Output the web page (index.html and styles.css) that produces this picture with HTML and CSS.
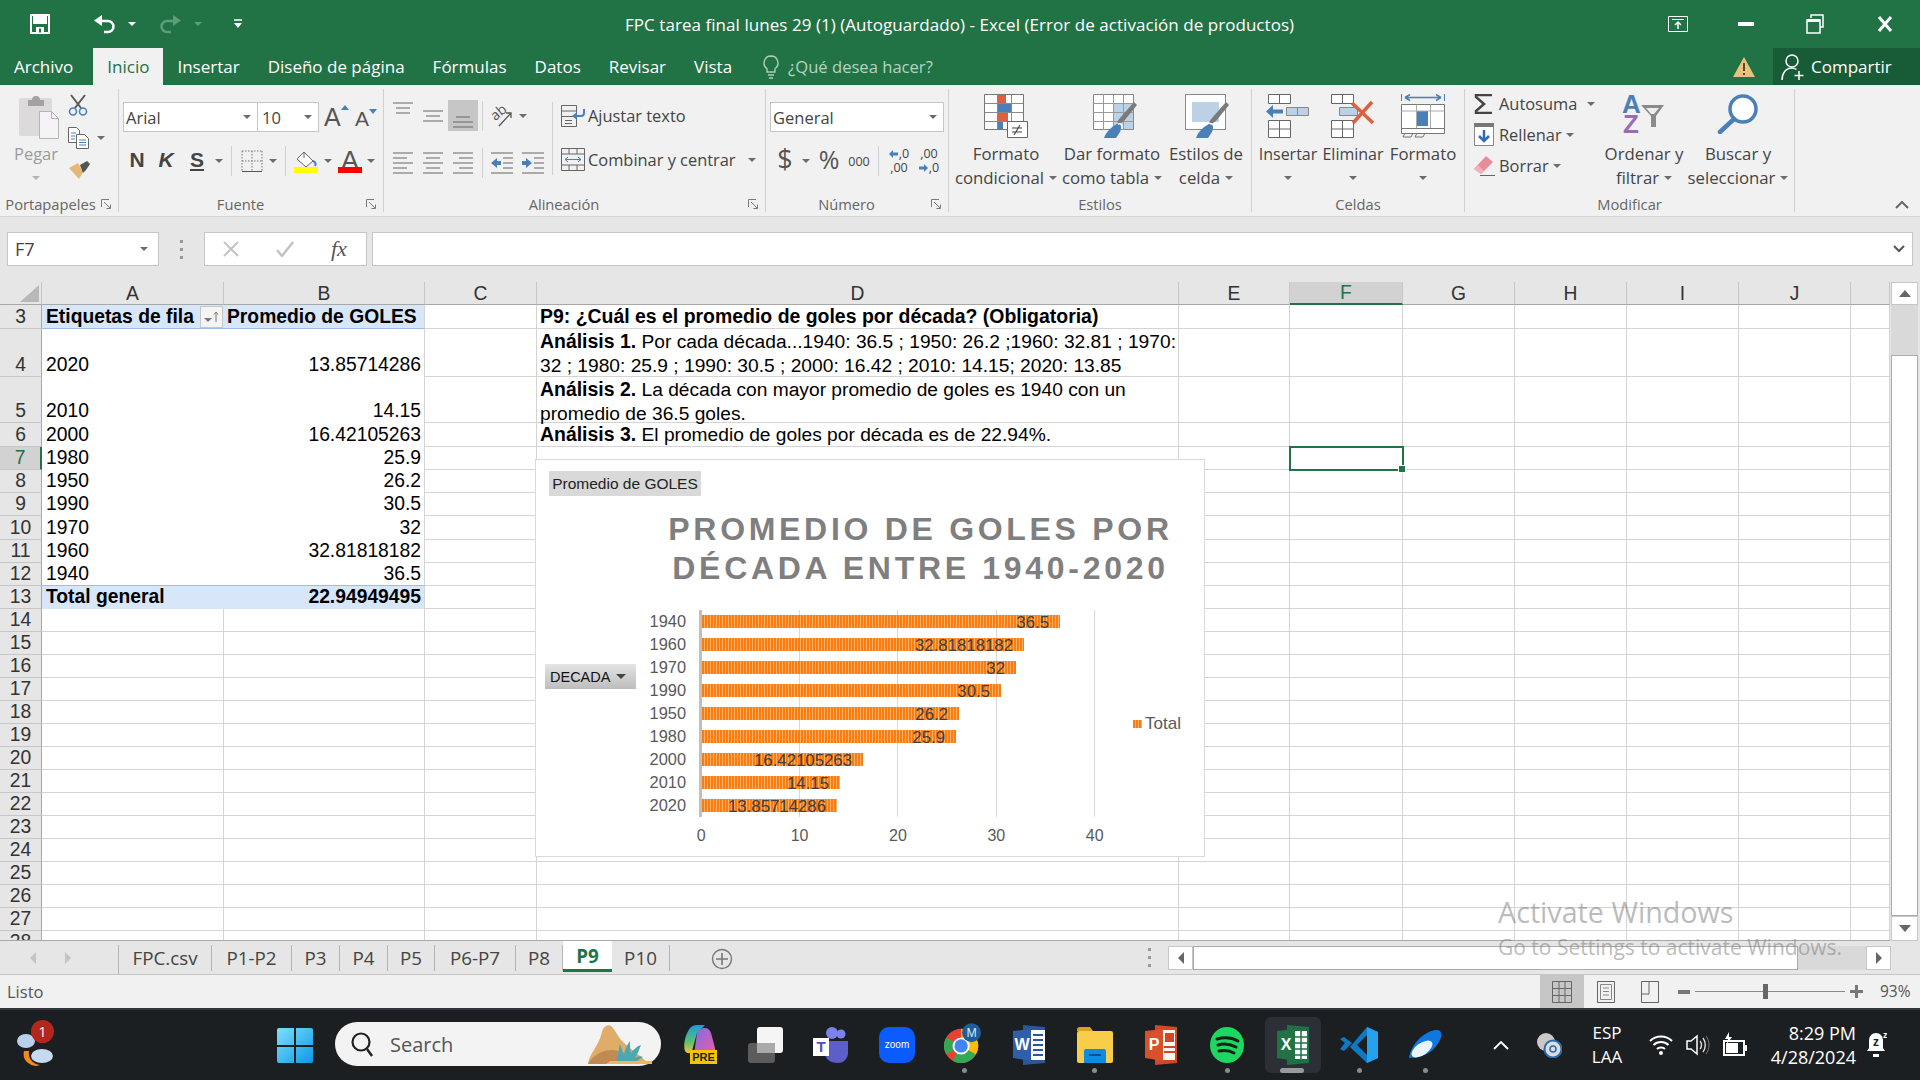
FILE: index.html
```html
<!DOCTYPE html>
<html lang="es">
<head>
  <meta charset="UTF-8" />
  <title>FPC tarea final lunes 29 (1) - Excel</title>
  <link rel="stylesheet" href="styles.css">
</head>
<body>

  <!-- Title bar -->
  <div class="titlebar">
    <div class="qat">
      <svg class="q-save" width="20" height="20" viewBox="0 0 20 20"><path d="M1 1h18v18H1z" fill="none" stroke="#fff" stroke-width="2"/><path d="M3 1h14v9H3z" fill="#fff"/><path d="M6 13h8v6H6z" fill="#fff"/><path d="M9 14.500h2v4H9z" fill="#217346"/></svg>
      <svg class="q-undo" width="24" height="20" viewBox="0 0 24 20"><path d="M7 7h8a5.500 5.500 0 0 1 0 11h-4" fill="none" stroke="#fff" stroke-width="2.500"/><path d="M9 1v11L1 6.500z" fill="#fff"/></svg>
      <i class="caret white q-c1"></i>
      <svg class="q-redo" width="24" height="20" viewBox="0 0 24 20"><path d="M17 7H9a5.500 5.500 0 0 0 0 11h4" fill="none" stroke="#5f9c7f" stroke-width="2.500"/><path d="M15 1v11l8-5.500z" fill="#5f9c7f"/></svg>
      <i class="caret faded q-c2"></i>
      <svg class="q-more" width="10" height="10" viewBox="0 0 10 10"><path d="M1 1h8" stroke="#fff" stroke-width="1.500"/><path d="M1 4h8L5 9z" fill="#fff"/></svg>
    </div>
    <div class="doc-title">FPC tarea final lunes 29 (1) (Autoguardado) - Excel (Error de activación de productos)</div>
    <div class="winctl">
      <svg class="w-disp" width="20" height="16" viewBox="0 0 20 16"><path d="M.5.500h19v15H.5z" fill="none" stroke="#fff"/><path d="M4 3.500h12" stroke="#fff"/><path d="M10 13V6M7 9l3-3 3 3" fill="none" stroke="#fff" stroke-width="1.500"/></svg>
      <svg class="w-min" width="16" height="4" viewBox="0 0 16 4"><path d="M0 0h16v4H0z" fill="#fff"/></svg>
      <svg class="w-max" width="18" height="20" viewBox="0 0 18 20"><path d="M1 6h13v13H1z" fill="none" stroke="#fff" stroke-width="1.500"/><path d="M1 5h13v3H1z" fill="#fff"/><path d="M5 4V1h12v12h-3" fill="none" stroke="#fff" stroke-width="1.500"/></svg>
      <svg class="w-close" width="16" height="16" viewBox="0 0 16 16"><path d="M2 1l12 14M14 1L2 15" stroke="#fff" stroke-width="3"/></svg>
    </div>
  </div>

  <!-- Ribbon tabs -->
  <div class="tabbar">
    <span class="rtab first">Archivo</span>
    <span class="rtab on">Inicio</span>
    <span class="rtab">Insertar</span>
    <span class="rtab">Diseño de página</span>
    <span class="rtab">Fórmulas</span>
    <span class="rtab">Datos</span>
    <span class="rtab">Revisar</span>
    <span class="rtab">Vista</span>
    <span class="tell">
      <svg width="16" height="24" viewBox="0 0 16 24"><path d="M8 1a7 7 0 0 0-4 12.700V17h8v-3.300A7 7 0 0 0 8 1z" fill="none" stroke="#a9cdb9" stroke-width="1.400"/><path d="M5 20h6M6 23h4" stroke="#a9cdb9" stroke-width="1.400"/></svg>
      ¿Qué desea hacer?
    </span>
    <span class="warn"><svg width="24" height="22" viewBox="0 0 24 22"><path d="M12 1l11 20H1z" fill="#e8c27f"/><path d="M11 7h2v8h-2zM11 17h2v2h-2z" fill="#5b4a2a"/></svg></span>
    <span class="share">
      <svg width="24" height="28" viewBox="0 0 24 28"><circle cx="11" cy="8" r="6" fill="none" stroke="#fff" stroke-width="1.500"/><path d="M1 27c0-7 4-12 10-12 2 0 3 .5 4.500 1.500" fill="none" stroke="#fff" stroke-width="1.500"/><path d="M18 18v9M13.500 22.500h9" stroke="#fff" stroke-width="1.500"/></svg>
      Compartir
    </span>
  </div>

  <!-- Ribbon -->
  <div class="ribbon">

    <div class="group g-clip">
      <div class="gbody">
        <div class="paste">
          <svg width="41" height="45" viewBox="0 0 41 45"><rect y="4" width="33" height="38" rx="2" fill="#dcdadb"/><path d="M9 6h4a4 4 0 0 1 8 0h4v6H9z" fill="#a3a1a2"/><path d="M20.500 17.500h12l7 7v20h-19z" fill="#f6f3f7" stroke="#b5b5b5"/><path d="M32.500 17.500v7h7" fill="none" stroke="#b5b5b5"/></svg>
          <span class="paste-text">Pegar</span>
          <i class="caret pale"></i>
        </div>
        <div class="clip-tools">
          <svg width="20" height="22" viewBox="0 0 20 22"><path d="M3 1l10 13M17 1L7 14" stroke="#5a5a5a" stroke-width="2"/><circle cx="5" cy="17.500" r="3.500" fill="none" stroke="#4a7fb8" stroke-width="1.600"/><circle cx="15" cy="17.500" r="3.500" fill="none" stroke="#4a7fb8" stroke-width="1.600"/></svg>
          <div class="copy-row">
            <svg width="21" height="22" viewBox="0 0 21 22"><path d="M.5.500h8l3 3v12H.5z" fill="#fff" stroke="#666"/><path d="M8.500 7.500h8l4 4v10h-12z" fill="#fff" stroke="#666"/><path d="M3 6h5M3 9h4M3 12h4M11 13h7M11 15.500h7M11 18h7" stroke="#4a7fb8"/></svg>
            <i class="caret"></i>
          </div>
          <svg width="24" height="20" viewBox="0 0 24 20"><path d="M1 8l9-5 5 9-4 7z" fill="#e6b877"/><path d="M12 5l7-4 3 3-4 6-3 3z" fill="#555"/></svg>
        </div>
      </div>
      <div class="glabel"><span>Portapapeles</span><svg class="launch" width="11" height="11" viewBox="0 0 11 11"><path d="M.5 8V.5H8M3 3l6 6M5.500 9.500h4v-4" fill="none" stroke="#7a7a7a"/></svg></div>
    </div>

    <div class="group g-font">
      <div class="gbody col">
        <div class="font-row1">
          <div class="combo c-font"><span>Arial</span><i class="caret"></i></div>
          <div class="combo c-size"><span>10</span><i class="caret"></i></div>
          <span class="grow big-a">A<svg width="8" height="5" viewBox="0 0 8 5"><path d="M4 0l4 5H0z" fill="#4a7fb8"/></svg></span>
          <span class="grow small-a">A<svg width="8" height="5" viewBox="0 0 8 5"><path d="M0 0h8L4 5z" fill="#4a7fb8"/></svg></span>
        </div>
        <div class="font-row2">
          <b class="fmt">N</b>
          <b class="fmt italic">K</b>
          <b class="fmt under">S</b>
          <i class="caret"></i>
          <i class="vline"></i>
          <svg width="22" height="22" viewBox="0 0 22 22"><path d="M1 1h20M1 11h20M1 1v20M21 1v20M11 1v20" fill="none" stroke="#777" stroke-dasharray="1.500 1.500"/><path d="M1 21.500h20" stroke="#555"/></svg>
          <i class="caret"></i>
          <i class="vline"></i>
          <svg width="24" height="23" viewBox="0 0 24 23"><path d="M10 2l9 9-7 6-9-8z" fill="#fff" stroke="#666"/><path d="M10 2v6" stroke="#666"/><path d="M19 11c3 1 3 3 2 5" fill="none" stroke="#4a7fb8" stroke-width="2"/><path d="M0 17h24v6H0z" fill="#ffff00"/></svg>
          <i class="caret"></i>
          <span class="color-a">A<u></u></span>
          <i class="caret"></i>
        </div>
      </div>
      <div class="glabel"><span>Fuente</span><svg class="launch" width="11" height="11" viewBox="0 0 11 11"><path d="M.5 8V.5H8M3 3l6 6M5.500 9.500h4v-4" fill="none" stroke="#7a7a7a"/></svg></div>
    </div>

    <div class="group g-align">
      <div class="gbody">
        <div class="align-left">
          <div class="al-row r1">
            <span class="al"><svg width="20" height="16" viewBox="0 0 20 16"><path d="M0 1h20M3 6h14M3 11h14" stroke="#666" stroke-width="1.200"/></svg></span>
            <span class="al"><svg width="20" height="12" viewBox="0 0 20 12"><path d="M0 1h20M3 6h14M0 11h20" stroke="#666" stroke-width="1.200"/></svg></span>
            <span class="al on"><svg width="20" height="12" viewBox="0 0 20 12"><path d="M3 1h14M0 6h20M0 11h20" stroke="#666" stroke-width="1.200"/></svg></span>
            <i class="vline"></i>
            <svg class="spill" width="22" height="24" viewBox="0 0 22 24"><text x="2" y="13" class="ab" transform="rotate(-40 9 12)">ab</text><path d="M8 22L20 9M15 9h5v5" fill="none" stroke="#555" stroke-width="1.300"/></svg>
            <i class="caret"></i>
          </div>
          <div class="al-row r2">
            <span class="al"><svg width="20" height="22" viewBox="0 0 20 22"><path d="M0 1h20M0 6h14M0 11h20M0 16h14M0 21h20" stroke="#666" stroke-width="1.200"/></svg></span>
            <span class="al"><svg width="20" height="22" viewBox="0 0 20 22"><path d="M0 1h20M3 6h14M0 11h20M3 16h14M0 21h20" stroke="#666" stroke-width="1.200"/></svg></span>
            <span class="al"><svg width="20" height="22" viewBox="0 0 20 22"><path d="M0 1h20M6 6h14M0 11h20M6 16h14M0 21h20" stroke="#666" stroke-width="1.200"/></svg></span>
            <i class="vline"></i>
            <svg width="22" height="22" viewBox="0 0 22 22"><path d="M0 1h22M12 6h10M12 11h10M12 16h10M0 21h22" stroke="#666" stroke-width="1.200"/><path d="M0 11l6-5v3h4v4H6v3z" fill="#4a7fb8"/></svg>
            <svg width="22" height="22" viewBox="0 0 22 22"><path d="M0 1h22M12 6h10M12 11h10M12 16h10M0 21h22" stroke="#666" stroke-width="1.200"/><path d="M10 11L4 6v3H0v4h4v3z" fill="#4a7fb8"/></svg>
          </div>
        </div>
        <div class="align-right">
          <div class="wrap-row">
            <svg width="24" height="22" viewBox="0 0 24 22"><path d="M.5.500h15v21H.5zM.5 6h15M.5 11.500h15M4 15.500h7M4 18.500h7" fill="none" stroke="#666"/><path d="M23 4v4a3 3 0 0 1-3 3h-7" fill="none" stroke="#4a7fb8" stroke-width="2"/><path d="M11 11l5-4v8z" fill="#4a7fb8"/></svg>
            <span>Ajustar texto</span>
          </div>
          <div class="wrap-row second">
            <svg width="24" height="23" viewBox="0 0 24 23"><path d="M.5.500h23v22H.5zM.5 6h23M.5 17h23M8 .5V6M16 .5V6M8 17v5.500M16 17v5.500" fill="none" stroke="#666"/><path d="M4 11.500h16M4 11.500l3-2.500M4 11.500l3 2.500M20 11.500l-3-2.500M20 11.500l-3 2.500" fill="none" stroke="#4a7fb8"/></svg>
            <span>Combinar y centrar</span>
            <i class="caret"></i>
          </div>
        </div>
      </div>
      <div class="glabel"><span>Alineación</span><svg class="launch" width="11" height="11" viewBox="0 0 11 11"><path d="M.5 8V.5H8M3 3l6 6M5.500 9.500h4v-4" fill="none" stroke="#7a7a7a"/></svg></div>
    </div>

    <div class="group g-num">
      <div class="gbody col">
        <div class="combo c-num"><span>General</span><i class="caret"></i></div>
        <div class="num-row">
          <span class="dollar">$</span>
          <i class="caret"></i>
          <span class="pct">%</span>
          <span class="thou">000</span>
          <i class="vline"></i>
          <span class="dec"><em><svg width="9" height="8" viewBox="0 0 9 8"><path d="M0 4l4-4v2.500h5v3H4V8z" fill="#4a7fb8"/></svg>,0</em><em>,00</em></span>
          <span class="dec"><em>,00</em><em><svg width="9" height="8" viewBox="0 0 9 8"><path d="M9 4L5 0v2.500H0v3h5V8z" fill="#4a7fb8"/></svg>,0</em></span>
        </div>
      </div>
      <div class="glabel"><span>Número</span><svg class="launch" width="11" height="11" viewBox="0 0 11 11"><path d="M.5 8V.5H8M3 3l6 6M5.500 9.500h4v-4" fill="none" stroke="#7a7a7a"/></svg></div>
    </div>

    <div class="group g-styles">
      <div class="gbody">
        <div class="bigbtn w114">
          <svg width="44" height="44" viewBox="0 0 44 44"><path d="M.5.500h39v35H.5z" fill="#fff" stroke="#777"/><path d="M14 1h8v8h-8z" fill="#dd6040"/><path d="M14 10h13v8H14z" fill="#4a7fb8"/><path d="M14 19h10v8H14z" fill="#dd6040"/><path d="M14 28h5v7h-5z" fill="#4a7fb8"/><path d="M.5 9.500h39M.5 18.500h39M.5 27.500h39M13.500.5v35M27.500.5v35" fill="none" stroke="#888"/><path d="M23.500 27.500h20v16h-20z" fill="#fff" stroke="#666"/><path d="M28 34h10M28 38h10M36 31l-6 10" stroke="#444" stroke-width="1.100"/></svg>
          <span>Formato</span>
          <span>condicional <i class="caret"></i></span>
        </div>
        <div class="bigbtn w98">
          <svg class="nudge6" width="44" height="44" viewBox="0 0 44 44"><path d="M.5.500h40v35H.5z" fill="#fff" stroke="#888"/><path d="M20 10h20v25H20z" fill="#bcd0e6"/><path d="M.5 9.500h40M.5 18.500h40M.5 27.500h40M10.500.5v35M20.500.5v35M30.500.5v35" stroke="#9a9a9a" fill="none"/><path d="M24 28l3-4 14-16 3 3-13 16-4 3z" fill="#7a7a7a"/><path d="M11 44c2-6 7-11 13-14 4-1 5 3 3 8l-4 6z" fill="#4a7fb8"/><path d="M25 30c3-1 5 1 4 5" fill="none" stroke="#fff" stroke-width="1.500"/></svg>
          <span>Dar formato</span>
          <span>como tabla <i class="caret"></i></span>
        </div>
        <div class="bigbtn w90">
          <svg class="nudge2" width="44" height="44" viewBox="0 0 44 44"><path d="M.5.500h40v35H.5z" fill="#fff" stroke="#888"/><path d="M7 8h27v20H7z" fill="#bcd0e6"/><path d="M24 28l3-4 14-16 3 3-13 16-4 3z" fill="#7a7a7a"/><path d="M11 44c2-6 7-11 13-14 4-1 5 3 3 8l-4 6z" fill="#4a7fb8"/><path d="M25 30c3-1 5 1 4 5" fill="none" stroke="#fff" stroke-width="1.500"/></svg>
          <span>Estilos de</span>
          <span>celda <i class="caret"></i></span>
        </div>
      </div>
      <div class="glabel"><span>Estilos</span></div>
    </div>

    <div class="group g-cells">
      <div class="gbody">
        <div class="bigbtn w72 tight">
          <svg width="44" height="44" viewBox="0 0 44 44"><path d="M2.500.5h22v9h-22zM13.500.5v9M2.500 26.500h22v17h-22zM2.500 35h22M13.500 26.500v17" fill="#fff" stroke="#666"/><path d="M20.500 13.500h22v8h-22z" fill="#bcd0e6" stroke="#888"/><path d="M31.500 13.500v8" stroke="#888"/><path d="M0 17.500l7-6.500v4.500h10v4H7v4.500z" fill="#4a7fb8"/></svg>
          <span>Insertar</span>
          <span class="only-caret"><i class="caret"></i></span>
        </div>
        <div class="bigbtn w58 tight">
          <svg width="44" height="44" viewBox="0 0 44 44"><path d="M.5.500h22v9H.5zM11.500.5v9M.5 26.500h22v17H.5zM.5 35h22M11.500 26.500v17" fill="#fff" stroke="#666"/><path d="M8.500 13.500h18v8h-18z" fill="#bcd0e6" stroke="#888"/><path d="M21 9l21 20M41 8L22 29" stroke="#dd6040" stroke-width="3.500"/></svg>
          <span>Eliminar</span>
          <span class="only-caret"><i class="caret"></i></span>
        </div>
        <div class="bigbtn w82">
          <svg width="44" height="44" viewBox="0 0 44 44"><path d="M.5 0v7M43.500 0v7" stroke="#4a7fb8"/><path d="M4 3.500h36M4 3.500l5-3M4 3.500l5 3M40 3.500l-5-3M40 3.500l-5 3" fill="none" stroke="#4a7fb8" stroke-width="1.500"/><path d="M.5 10.500h43v29H.5z" fill="#fff" stroke="#777"/><path d="M11 19h11v15H11z" transform="translate(5 -2)" fill="#4a7fb8"/><path d="M.5 17h43M15.500 10.500v24M29.500 10.500v24" fill="none" stroke="#aaa"/><path d="M.5 34.500h43M4 39l-2 4h8l2-4M16 39l-2 4h8l2-4" fill="none" stroke="#777"/></svg>
          <span>Formato</span>
          <span class="only-caret"><i class="caret"></i></span>
        </div>
      </div>
      <div class="glabel"><span>Celdas</span></div>
    </div>

    <div class="group g-edit">
      <div class="gbody">
        <div class="edit-list">
          <div class="edit-row">
            <svg width="20" height="20" viewBox="0 0 20 20"><path d="M18 1H2v2l8 7-8 7v2h16" fill="none" stroke="#444" stroke-width="2.500"/></svg>
            <span>Autosuma</span><i class="caret gap14"></i>
          </div>
          <div class="edit-row">
            <svg width="20" height="23" viewBox="0 0 20 23"><path d="M.5.500h19v22H.5z" fill="#fff" stroke="#888"/><path d="M0 0h20v4H0z" fill="#777"/><path d="M10 7v11M5 13l5 5 5-5" fill="none" stroke="#2f6db5" stroke-width="2.500"/></svg>
            <span>Rellenar</span><i class="caret"></i>
          </div>
          <div class="edit-row">
            <svg width="22" height="20" viewBox="0 0 22 20"><path d="M13 0l7 6-12 12-7-5z" fill="#e98b9b"/><path d="M1 13l7 5 3-3-6-6z" fill="#f1b2bd"/><path d="M7 19.500h15" stroke="#666"/></svg>
            <span>Borrar</span><i class="caret"></i>
          </div>
        </div>
        <div class="bigbtn w82 sort">
          <svg class="spill" width="44" height="40" viewBox="0 0 44 40"><text x="0" y="19" class="az a-blue">A</text><text x="1" y="39" class="az a-purple">Z</text><path d="M19 11h23l-8 11v11h-5V22z" fill="#8a8a8a"/><path d="M24 14h13l-5 6h-3z" fill="#eee"/></svg>
          <span>Ordenar y</span>
          <span>filtrar <i class="caret"></i></span>
        </div>
        <div class="bigbtn w106 sort">
          <svg width="42" height="40" viewBox="0 0 42 40"><circle cx="26" cy="15" r="13" fill="#fff" stroke="#4a7fb8" stroke-width="3.500"/><path d="M17 25L3 38" stroke="#4a7fb8" stroke-width="4.500" stroke-linecap="round"/></svg>
          <span>Buscar y</span>
          <span>seleccionar <i class="caret"></i></span>
        </div>
      </div>
      <div class="glabel"><span>Modificar</span></div>
    </div>

    <div class="ribbon-end">
      <svg width="14" height="8" viewBox="0 0 14 8"><path d="M1 7l6-6 6 6" fill="none" stroke="#666" stroke-width="2"/></svg>
    </div>
  </div>

  <!-- Formula bar -->
  <div class="formula">
    <div class="namebox"><span>F7</span><i class="caret"></i></div>
    <div class="fdots"><i></i><i></i><i></i></div>
    <div class="fx-btns">
      <svg width="16" height="16" viewBox="0 0 16 16"><path d="M1 1l14 14M15 1L1 15" stroke="#c3c3c3" stroke-width="2"/></svg>
      <svg width="18" height="16" viewBox="0 0 18 16"><path d="M1 9l5 6L17 1" fill="none" stroke="#c3c3c3" stroke-width="2.500"/></svg>
      <span class="fx">fx</span>
    </div>
    <div class="finput"><svg width="12" height="8" viewBox="0 0 12 8"><path d="M1 1l5 5 5-5" fill="none" stroke="#555" stroke-width="2"/></svg></div>
  </div>

  <!-- Worksheet -->
  <div class="sheet">
    <div class="grid-wrap">
      <table class="grid">
        <colgroup>
          <col class="c-row"><col class="c-a"><col class="c-b"><col class="c-c"><col class="c-d"><col class="c-e"><col class="c-f"><col class="c-g"><col class="c-g"><col class="c-g"><col class="c-g"><col class="c-k">
        </colgroup>
        <tr class="cols"><th class="corner"><svg width="19" height="17" viewBox="0 0 19 17"><path d="M19 0v17H0z" fill="#b8b8b8"/></svg></th><th>A</th><th>B</th><th>C</th><th>D</th><th>E</th><th class="sel-col">F</th><th>G</th><th>H</th><th>I</th><th>J</th><th></th></tr>
        <tr class="h24"><th>3</th><td class="pv-head"><b>Etiquetas de fila</b><span class="filter"><svg width="18" height="14" viewBox="0 0 18 14"><path d="M1 8h8L5 12z" fill="#777"/><path d="M13 3v9M11 4.500l2-2.500 2 2.500" fill="none" stroke="#777"/></svg></span></td><td class="pv-head"><b>Promedio de GOLES</b></td><td></td><td class="d"><b>P9: ¿Cuál es el promedio de goles por década? (Obligatoria)</b></td><td></td><td></td><td></td><td></td><td></td><td></td><td></td></tr>
        <tr class="h48"><th>4</th><td class="pv">2020</td><td class="pv num">13.85714286</td><td></td><td class="d wrapped"><div><b>Análisis 1.</b> Por cada década...1940: 36.5 ; 1950: 26.2 ;1960: 32.81 ; 1970: 32 ; 1980: 25.9 ; 1990: 30.5 ; 2000: 16.42 ; 2010: 14.15; 2020: 13.85</div></td><td></td><td></td><td></td><td></td><td></td><td></td><td></td></tr>
        <tr class="h46"><th>5</th><td class="pv">2010</td><td class="pv num">14.15</td><td></td><td class="d wrapped"><div><b>Análisis 2.</b> La década con mayor promedio de goles es 1940 con un promedio de 36.5 goles.</div></td><td></td><td></td><td></td><td></td><td></td><td></td><td></td></tr>
        <tr class="h24"><th>6</th><td class="pv">2000</td><td class="pv num">16.42105263</td><td></td><td class="d"><b>Análisis 3.</b> El promedio de goles por década es de 22.94%.</td><td></td><td></td><td></td><td></td><td></td><td></td><td></td></tr>
        <tr><th class="sel-row">7</th><td class="pv">1980</td><td class="pv num">25.9</td><td></td><td></td><td></td><td></td><td></td><td></td><td></td><td></td><td></td></tr>
        <tr><th>8</th><td class="pv">1950</td><td class="pv num">26.2</td><td></td><td></td><td></td><td></td><td></td><td></td><td></td><td></td><td></td></tr>
        <tr><th>9</th><td class="pv">1990</td><td class="pv num">30.5</td><td></td><td></td><td></td><td></td><td></td><td></td><td></td><td></td><td></td></tr>
        <tr class="h24"><th>10</th><td class="pv">1970</td><td class="pv num">32</td><td></td><td></td><td></td><td></td><td></td><td></td><td></td><td></td><td></td></tr>
        <tr><th>11</th><td class="pv">1960</td><td class="pv num">32.81818182</td><td></td><td></td><td></td><td></td><td></td><td></td><td></td><td></td><td></td></tr>
        <tr><th>12</th><td class="pv last">1940</td><td class="pv last num">36.5</td><td></td><td></td><td></td><td></td><td></td><td></td><td></td><td></td><td></td></tr>
        <tr><th>13</th><td class="pv-total"><b>Total general</b></td><td class="pv-total num"><b>22.94949495</b></td><td></td><td></td><td></td><td></td><td></td><td></td><td></td><td></td><td></td></tr>
        <tr><th>14</th><td></td><td></td><td></td><td></td><td></td><td></td><td></td><td></td><td></td><td></td><td></td></tr>
        <tr><th>15</th><td></td><td></td><td></td><td></td><td></td><td></td><td></td><td></td><td></td><td></td><td></td></tr>
        <tr><th>16</th><td></td><td></td><td></td><td></td><td></td><td></td><td></td><td></td><td></td><td></td><td></td></tr>
        <tr><th>17</th><td></td><td></td><td></td><td></td><td></td><td></td><td></td><td></td><td></td><td></td><td></td></tr>
        <tr><th>18</th><td></td><td></td><td></td><td></td><td></td><td></td><td></td><td></td><td></td><td></td><td></td></tr>
        <tr><th>19</th><td></td><td></td><td></td><td></td><td></td><td></td><td></td><td></td><td></td><td></td><td></td></tr>
        <tr><th>20</th><td></td><td></td><td></td><td></td><td></td><td></td><td></td><td></td><td></td><td></td><td></td></tr>
        <tr><th>21</th><td></td><td></td><td></td><td></td><td></td><td></td><td></td><td></td><td></td><td></td><td></td></tr>
        <tr><th>22</th><td></td><td></td><td></td><td></td><td></td><td></td><td></td><td></td><td></td><td></td><td></td></tr>
        <tr><th>23</th><td></td><td></td><td></td><td></td><td></td><td></td><td></td><td></td><td></td><td></td><td></td></tr>
        <tr><th>24</th><td></td><td></td><td></td><td></td><td></td><td></td><td></td><td></td><td></td><td></td><td></td></tr>
        <tr><th>25</th><td></td><td></td><td></td><td></td><td></td><td></td><td></td><td></td><td></td><td></td><td></td></tr>
        <tr><th>26</th><td></td><td></td><td></td><td></td><td></td><td></td><td></td><td></td><td></td><td></td><td></td></tr>
        <tr><th>27</th><td></td><td></td><td></td><td></td><td></td><td></td><td></td><td></td><td></td><td></td><td></td></tr>
        <tr><th>28</th><td></td><td></td><td></td><td></td><td></td><td></td><td></td><td></td><td></td><td></td><td></td></tr>
      </table>

      <div class="cell-cursor"></div>

      <!-- Pivot chart, floats over the cells -->
      <div class="chart">
        <div class="chart-pill">Promedio de GOLES</div>
        <div class="chart-title">PROMEDIO DE GOLES POR<br>DÉCADA ENTRE 1940-2020</div>
        <div class="chart-body">
          <div class="decada">DECADA <i class="caret dark"></i></div>
          <div class="cats">
            <span>1940</span><span>1960</span><span>1970</span><span>1990</span><span>1950</span><span>1980</span><span>2000</span><span>2010</span><span>2020</span>
          </div>
          <div class="plot">
            <div class="bar-row"><div class="bar" style="width:358px">36.5</div></div>
            <div class="bar-row"><div class="bar" style="width:322px">32.81818182</div></div>
            <div class="bar-row"><div class="bar" style="width:314px">32</div></div>
            <div class="bar-row"><div class="bar" style="width:299px">30.5</div></div>
            <div class="bar-row"><div class="bar" style="width:257px">26.2</div></div>
            <div class="bar-row"><div class="bar" style="width:254px">25.9</div></div>
            <div class="bar-row"><div class="bar" style="width:161px">16.42105263</div></div>
            <div class="bar-row"><div class="bar" style="width:138px">14.15</div></div>
            <div class="bar-row"><div class="bar" style="width:135px">13.85714286</div></div>
          </div>
          <div class="legend"><i></i>Total</div>
        </div>
        <div class="ticks"><span>0</span><span>10</span><span>20</span><span>30</span><span>40</span></div>
      </div>
    </div>

    <div class="vscroll">
      <div class="sbtn"><i class="tri up"></i></div>
      <div class="vtrack"></div>
      <div class="vthumb"></div>
      <div class="sbtn down"><i class="tri dn"></i></div>
    </div>
  </div>

  <!-- Sheet tabs -->
  <div class="sheetbar">
    <div class="sheet-nav">
      <svg width="7" height="12" viewBox="0 0 7 12"><path d="M6 0v12L0 6z" fill="#c4c4c4"/></svg>
      <svg width="7" height="12" viewBox="0 0 7 12"><path d="M1 0v12l6-6z" fill="#c4c4c4"/></svg>
    </div>
    <div class="sheet-tabs">
      <span class="stab w93">FPC.csv</span>
      <span class="stab w80">P1-P2</span>
      <span class="stab w48">P3</span>
      <span class="stab w48">P4</span>
      <span class="stab w47">P5</span>
      <span class="stab w81">P6-P7</span>
      <span class="stab w47">P8</span>
      <span class="stab w48 on">P9</span>
      <span class="stab w58">P10</span>
      <svg class="add" width="22" height="22" viewBox="0 0 22 22"><circle cx="11" cy="11" r="9.500" fill="none" stroke="#777" stroke-width="1.400"/><path d="M11 5v12M5 11h12" stroke="#777" stroke-width="1.600"/></svg>
    </div>
    <div class="hdots"><i></i><i></i><i></i></div>
    <div class="hscroll">
      <div class="sbtn h"><i class="tri lf"></i></div>
      <div class="hthumb"></div>
      <div class="htrack"></div>
      <div class="sbtn h"><i class="tri rt"></i></div>
    </div>
  </div>

  <!-- Status bar -->
  <div class="statusbar">
    <span class="ready">Listo</span>
    <div class="views">
      <span class="view on"><svg width="20" height="22" viewBox="0 0 20 22"><path d="M.5.500h19v21H.5zM.5 7.500h19M.5 14.500h19M7 .5v21M13 .5v21" fill="none" stroke="#666"/></svg></span>
      <span class="view"><svg width="18" height="22" viewBox="0 0 18 22"><path d="M.5.500h17v21H.5z" fill="none" stroke="#666"/><path d="M3.500 3.500h11v15h-11zM6 7h6M6 10.500h6M6 14h6" fill="none" stroke="#888"/></svg></span>
      <span class="view"><svg width="18" height="22" viewBox="0 0 18 22"><path d="M.5.500h17v21H.5zM.5 13h7.500V.5" fill="none" stroke="#666"/></svg></span>
    </div>
    <div class="zoomer">
      <svg width="12" height="4" viewBox="0 0 12 4"><path d="M0 0h12v4H0z" fill="#777"/></svg>
      <div class="slider"><i></i></div>
      <svg width="13" height="13" viewBox="0 0 13 13"><path d="M5 0h3v5h5v3H8v5H5V8H0V5h5z" fill="#777"/></svg>
    </div>
    <span class="zoom-pct">93%</span>
  </div>

  <!-- Windows taskbar -->
  <div class="taskbar">
    <div class="tb-weather">
      <svg width="44" height="42" viewBox="0 0 44 42"><ellipse cx="11" cy="17" rx="9" ry="7" fill="#b9d0ea"/><path d="M9 27a12 12 0 0 0 16 14c-7-1-12-6-11-14z" fill="#f08a1d"/><ellipse cx="27" cy="32" rx="11" ry="7" fill="#c6daf0"/></svg>
      <span class="badge">1</span>
    </div>
    <span class="tb-icon"><svg width="36" height="35" viewBox="0 0 36 35"><defs><linearGradient id="winb" x1="0" y1="0" x2="1" y2="1"><stop offset="0" stop-color="#7ee0fb"/><stop offset="1" stop-color="#0a98e8"/></linearGradient></defs><path d="M0 2a2 2 0 0 1 2-2h15v17H0zM19 0h15a2 2 0 0 1 2 2v15H19zM0 19h17v16H2a2 2 0 0 1-2-2zM19 19h17v14a2 2 0 0 1-2 2H19z" fill="url(#winb)"/></svg></span>
    <div class="searchbox">
      <svg width="24" height="26" viewBox="0 0 24 26"><circle cx="11" cy="11" r="8.500" fill="none" stroke="#222" stroke-width="2.200"/><path d="M17 18l5 7" stroke="#222" stroke-width="2.500"/></svg>
      <span>Search</span>
      <svg class="desert" width="66" height="40" viewBox="0 0 66 40"><path d="M2 40C4 28 12 24 16 8c1-5 6-8 9-6 4 3 6 10 12 16 6 6 16 12 26 22z" fill="#e0ad68"/><path d="M2 40c4-8 14-14 24-14 8 0 20 6 30 14z" fill="#c08a52"/><path d="M30 40c3-8 2-14 4-20 2 6 3 8 4 11 1-6 3-10 6-14 0 5 0 9 1 12 3-4 6-7 10-8-2 5-4 10-6 13 3-2 6-2 8-1-4 2-7 5-8 7z" fill="#4aa9ae"/><path d="M20 40h46v-3H24z" fill="#eab968"/></svg>
    </div>
    <span class="tb-icon copilot"><svg width="36" height="40" viewBox="0 0 36 40"><defs><linearGradient id="copa" x1="0" y1="0" x2="0" y2="1"><stop offset="0" stop-color="#1d9be0"/><stop offset=".6" stop-color="#5cc06a"/><stop offset="1" stop-color="#e9c63a"/></linearGradient><linearGradient id="copb" x1="0" y1="0" x2="1" y2="1"><stop offset="0" stop-color="#7b6fe6"/><stop offset="1" stop-color="#ee5aa8"/></linearGradient></defs><path d="M8 3c2-2 4-3 7-3h8l-8 8-5 18c-1 3-5 3-7 0-2-6 0-16 5-23z" fill="url(#copa)"/><path d="M15 8c1-3 4-5 8-5 3 0 5 2 6 5l4 15c1 3-1 6-4 6H12z" fill="url(#copb)"/><path d="M8 25h27v14H8z" fill="#f5c400"/><text x="21.500" y="36" class="pre">PRE</text></svg></span>
    <span class="tb-icon"><svg width="36" height="36" viewBox="0 0 36 36"><rect x="1" y="16" width="27" height="20" rx="3" fill="#5c5c5c"/><rect x="10" y="0" width="26" height="26" rx="3" fill="#f5f5f5"/><rect x="10" y="16" width="18" height="10" fill="#aaa"/></svg></span>
    <span class="tb-icon"><svg width="36" height="36" viewBox="0 0 36 36"><circle cx="28" cy="7" r="4.500" fill="#7b83eb"/><circle cx="19" cy="6" r="6" fill="#7b83eb"/><path d="M12 14h23v12c0 5-4 10-10 10-8 0-13-4-13-10z" fill="#5b5fc7"/><path d="M0 11h16v18H0z" fill="#fff"/><text x="8" y="25" class="teams">T</text></svg></span>
    <span class="tb-icon"><span class="zoom-logo">zoom</span></span>
    <span class="tb-icon"><svg width="38" height="44" viewBox="0 0 40 46"><circle cx="18" cy="24" r="18" fill="#e94235"/><path d="M18 24L33.600 33A18 18 0 0 1 9 39.600z" fill="#34a853"/><path d="M18 24L2.400 33A18 18 0 0 1 2.400 15z" fill="#34a853"/><path d="M18 6a18 18 0 0 1 15.600 27L18 24z" fill="#fbbc04"/><circle cx="18" cy="24" r="9" fill="#fff"/><circle cx="18" cy="24" r="7" fill="#4285f4"/><circle cx="29" cy="10" r="10" fill="#1c5d9b"/><text x="29" y="15" class="m-letter">M</text></svg></span>
    <span class="tb-icon"><svg width="32" height="40" viewBox="0 0 32 40"><path d="M10 0l22 2v36l-22 2z" fill="#2b579a" transform="translate(0 0)"/><path d="M18 5h14v30H18z" fill="#fff"/><path d="M20 10h10M20 15h10M20 20h10M20 25h10M20 30h10" stroke="#2b579a" stroke-width="2"/><path d="M0 6l18-2v32L0 33z" fill="#2f5fa8"/><text x="9" y="25" class="doc-letter">W</text></svg></span>
    <span class="tb-icon"><svg width="36" height="36" viewBox="0 0 36 36"><path d="M0 3a3 3 0 0 1 3-3h10l3 4h-16z" fill="#d8a320"/><rect y="4" width="36" height="32" rx="2" fill="#f8cd4a"/><path d="M9 22h18a2 2 0 0 1 2 2v12H7V24a2 2 0 0 1 2-2z" fill="#0f8be0"/><path d="M12 28h12" stroke="#004f8f" stroke-width="2"/></svg></span>
    <span class="tb-icon"><svg width="32" height="40" viewBox="0 0 32 40"><path d="M10 0l22 2v36l-22 2z" fill="#d24726"/><path d="M16 5h14v30H16z" fill="#fff" fill-opacity=".95"/><path d="M20 8h9v9h-9z" fill="#d24726"/><path d="M19 22h11M19 27h11" stroke="#d24726" stroke-width="2"/><path d="M0 6l18-2v32L0 33z" fill="#d9512c"/><text x="9" y="25" class="doc-letter">P</text></svg></span>
    <span class="tb-icon"><svg width="34" height="36" viewBox="0 0 34 36"><ellipse cx="17" cy="18" rx="17" ry="18" fill="#1ed760"/><path d="M7 12c7-2 14-2 21 2M8 18c6-2 12-1 18 2M9 24c5-1 10-1 15 2" fill="none" stroke="#152017" stroke-width="3" stroke-linecap="round"/></svg></span>
    <span class="tb-icon active"><svg width="32" height="40" viewBox="0 0 32 40"><path d="M10 0l22 2v36l-22 2z" fill="#1e7145"/><path d="M18 6h12v28H18z" fill="#fff"/><path d="M18 12h12M18 18h12M18 24h12M18 30h12M24 6v28" stroke="#1e7145" stroke-width="1.500"/><path d="M0 6l18-2v32L0 33z" fill="#217346"/><text x="9" y="25" class="doc-letter">X</text></svg></span>
    <span class="tb-icon"><svg width="38" height="36" viewBox="0 0 38 36"><path d="M27 0l11 5v26l-11 5L10 20z" fill="#0e7ac4"/><path d="M27 0l11 5v26l-11 5z" fill="#24a0ed"/><path d="M0 12l4-2 8 6-8 8-4-2 5-6zM27 8v20l-15-10z" fill="#0e7ac4"/><path d="M27 8L17 18l10 10z" fill="#1c1f22"/></svg></span>
    <span class="tb-icon"><svg width="36" height="30" viewBox="0 0 36 30"><path d="M2 28C4 16 14 3 28 0c6-1 8 4 5 10-4 9-14 18-31 18z" fill="#0f78e0"/><ellipse cx="15" cy="19" rx="12" ry="6" fill="#e9f4ff" transform="rotate(-35 15 19)"/></svg></span>

    <div class="tray">
      <span class="t-chev"><svg width="16" height="9" viewBox="0 0 16 9"><path d="M1 8l7-7 7 7" fill="none" stroke="#fff" stroke-width="1.800"/></svg></span>
      <span class="t-one"><svg width="26" height="26" viewBox="0 0 26 26"><circle cx="10" cy="10" r="9" fill="#c9c9c9"/><circle cx="17" cy="17" r="8.500" fill="#ddd" stroke="#2b6cb0" stroke-width="2"/><circle cx="17" cy="17" r="3" fill="none" stroke="#2b6cb0" stroke-width="1.500"/></svg></span>
      <span class="t-lang">ESP<br>LAA</span>
      <span class="t-ico"><svg width="24" height="22" viewBox="0 0 24 22"><path d="M1 7c6-6 16-6 22 0M4.500 11c4-4 11-4 15 0M8 15c2-2 6-2 8 0" fill="none" stroke="#fff" stroke-width="2"/><circle cx="12" cy="19" r="2" fill="#fff"/></svg></span>
      <span class="t-ico"><svg width="24" height="22" viewBox="0 0 24 22"><path d="M1 7h4l6-5v18l-6-5H1z" fill="none" stroke="#fff" stroke-width="1.500"/><path d="M14 7c2 2 2 6 0 8M17 4c3 4 3 10 0 14" fill="none" stroke="#ddd" stroke-width="1.400"/><path d="M20 2c4 5 4 13 0 18" fill="none" stroke="#777"/></svg></span>
      <span class="t-ico"><svg width="26" height="26" viewBox="0 0 26 26"><path d="M2 9h20v14H2z" fill="none" stroke="#fff" stroke-width="2"/><path d="M4 11h12v10H4z" fill="#fff"/><path d="M22 13h3v6h-3z" fill="#fff"/><path d="M7 0L3 7h3l-1 5 5-7H7z" fill="#fff"/></svg></span>
      <div class="t-clock"><span>8:29 PM</span><span>4/28/2024</span></div>
      <span class="t-bell"><svg width="20" height="28" viewBox="0 0 20 28"><path d="M9 2a7 7 0 0 0-7 7v8l-2 3h18l-2-3V9a7 7 0 0 0-7-7z" fill="#fff"/><path d="M6 23h6v3H6z" fill="#fff"/><text x="9" y="15" class="zz">z</text><text x="16" y="7" class="zz2">z</text></svg></span>
    </div>
  </div>

  <!-- Watermark lies over the grid and sheet bar -->
  <div class="watermark">
    <div class="wm-big">Activate Windows</div>
    <div class="wm-small">Go to Settings to activate Windows.</div>
  </div>
  <div class="tb-dots">
    <i class="d1"></i><i class="d2"></i><i class="d3"></i><i class="d4"></i><i class="d5"></i><i class="d6"></i>
  </div>

</body>
</html>
```

FILE: styles.css
```css
* {
  box-sizing: border-box;
}

body {
  margin: 0;
  width: 1920px;
  height: 1080px;
  overflow: hidden;
  position: relative;
  display: flex;
  flex-direction: column;
  font-family: "Open Sans", "Noto Sans", sans-serif;
  color: #444;
  background: #e6e6e6;
}

svg {
  display: block;
  flex: none;
}

svg.spill {
  overflow: visible;
}

.caret {
  display: block;
  flex: none;
  width: 0;
  height: 0;
  border-left: 4px solid transparent;
  border-right: 4px solid transparent;
  border-top: 4px solid #6b6b6b;
}

.caret.white { border-top-color: #fff; }
.caret.faded { border-top-color: #5f9c7f; }
.caret.pale { border-top-color: #b4b4b4; }
.caret.dark { border-top-color: #444; }

.vline {
  display: block;
  width: 1px;
  height: 30px;
  background: #d0d0d0;
  justify-self: center;
}

/* Title bar */
.titlebar {
  height: 48px;
  flex: none;
  background: #217346;
  display: flex;
  align-items: center;
  position: relative;
  color: #fff;
}

.qat {
  display: flex;
  align-items: center;
  width: 625px;
}

.q-save { margin-left: 30px; }
.q-undo { margin-left: 43px; }
.q-c1 { margin-left: 11px; }
.q-redo { margin-left: 22px; }
.q-c2 { margin-left: 12px; }
.q-more { margin-left: 31px; }

.doc-title {
  font-size: 17px;
  white-space: nowrap;
  letter-spacing: .05px;
}

.winctl {
  margin-left: auto;
  display: flex;
  align-items: center;
}

.w-disp { margin-right: 50px; }
.w-min { margin-right: 52px; }
.w-max { margin-right: 53px; }
.w-close { margin-right: 27px; }

/* Ribbon tabs */
.tabbar {
  height: 37px;
  flex: none;
  background: #217346;
  display: flex;
  align-items: stretch;
  color: #fff;
  font-size: 17px;
}

.rtab {
  display: flex;
  align-items: center;
  padding: 0 14px;
  white-space: nowrap;
}

.rtab.first { margin-right: 6px; }

.rtab.on {
  background: #f1f1f1;
  color: #217346;
}

.tell {
  display: flex;
  align-items: center;
  gap: 9px;
  margin-left: 17px;
  color: #b5d3c2;
  white-space: nowrap;
  font-size: 16.600px;
}

.warn {
  margin-left: auto;
  display: flex;
  align-items: center;
  margin-right: 17px;
}

.share {
  width: 147px;
  background: #185c37;
  display: flex;
  align-items: center;
  gap: 6px;
  padding-left: 8px;
}

/* Ribbon */
.ribbon {
  height: 132px;
  flex: none;
  background: #f1f1f1;
  border-bottom: 1px solid #d4d4d4;
  display: flex;
  padding-top: 4px;
  font-size: 16.400px;
}

.group {
  height: 123px;
  flex: none;
  display: flex;
  flex-direction: column;
  border-right: 1px solid #d0d0d0;
}

.g-clip { width: 119px; }
.g-font { width: 265px; }
.g-align { width: 382px; }
.g-num { width: 183px; }
.g-styles { width: 303px; }
.g-cells { width: 213px; }
.g-edit { width: 330px; }

.gbody {
  height: 107px;
  display: flex;
}

.gbody.col {
  flex-direction: column;
}

.glabel {
  height: 16px;
  display: flex;
  align-items: center;
  font-size: 14.700px;
  color: #666;
  white-space: nowrap;
}

.glabel span {
  flex: 1;
  text-align: center;
}

.launch {
  margin-right: 6px;
}

.g-font .glabel span, .g-align .glabel span, .g-num .glabel span {
  padding-right: 4px;
}

/* Clipboard */
.paste {
  margin-left: 19px;
  padding-top: 5px;
  width: 41px;
  display: flex;
  flex-direction: column;
  align-items: center;
  color: #9b9b9b;
}

.paste-text {
  line-height: 20px;
  margin-top: 5px;
  font-size: 16.500px;
  margin-left: -7px;
}

.paste .caret {
  margin-top: 12px;
  margin-left: -7px;
}

.clip-tools {
  margin-left: 8px;
  padding-top: 5px;
  display: flex;
  flex-direction: column;
  gap: 11px;
}

.copy-row {
  display: flex;
  align-items: center;
  gap: 8px;
}

/* Font */
.g-font .gbody { padding-left: 4px; }

.font-row1 {
  display: flex;
  align-items: center;
  margin-top: 13px;
  height: 30px;
}

.combo {
  height: 30px;
  background: #fff;
  border: 1px solid #c6c6c6;
  display: flex;
  align-items: center;
  justify-content: space-between;
  padding: 0 6px 0 2px;
  font-size: 16.500px;
  color: #444;
}

.c-font { width: 135px; }
.c-size { width: 61px; border-left: 0; padding-left: 4px; }

.grow {
  display: flex;
  color: #555;
  font-family: "Liberation Sans", sans-serif;
}

.big-a { font-size: 25px; margin-left: 5px; width: 31px; }
.small-a { font-size: 21px; padding-top: 3px; }

.grow svg { margin-top: 2px; }

.font-row2 {
  display: grid;
  grid-template-columns: 28px 30px 32px 12px 12px 29px 14px 10px 32px 12px 32px 10px;
  align-items: center;
  justify-items: center;
  margin-top: 14px;
  height: 28px;
}

.fmt {
  font-family: "Liberation Sans", sans-serif;
  font-size: 21px;
  color: #444;
  margin-top: -3px;
}

.fmt.italic { font-style: italic; }
.fmt.under { text-decoration: underline; }

.color-a {
  position: relative;
  width: 24px;
  height: 25px;
  text-align: center;
  font: 26px/23px "Liberation Sans", sans-serif;
  color: #555;
}

.color-a u {
  display: block;
  height: 6px;
  background: #f00;
  margin-top: -5px;
  position: relative;
}

/* Alignment */
.align-left {
  width: 169px;
  padding-left: 4px;
  padding-top: 11px;
  position: relative;
}

.align-left::after {
  content: "";
  position: absolute;
  right: 0;
  top: 13px;
  width: 1px;
  height: 73px;
  background: #d0d0d0;
}

.al-row {
  display: grid;
  align-items: center;
  justify-items: center;
}

.al-row.r1 {
  grid-template-columns: 30px 30px 30px 8px 31px 11px;
  height: 31px;
}

.al-row.r2 {
  grid-template-columns: 30px 30px 30px 8px 32px 30px;
  height: 24px;
  margin-top: 16px;
}

.al {
  width: 30px;
  height: 31px;
  display: flex;
  justify-content: center;
  align-items: center;
}

.al-row.r1 .al:first-child { align-items: flex-start; padding-top: 2px; }
.al.on { background: #c6c6c6; align-items: flex-end; padding-bottom: 3px; }

.ab {
  font: 14px "Open Sans", sans-serif;
  fill: #555;
}

.align-right {
  padding-left: 8px;
  padding-top: 11px;
}

.wrap-row {
  display: flex;
  align-items: center;
  height: 31px;
  gap: 3px;
  white-space: nowrap;
}

.wrap-row.second {
  margin-top: 13px;
}

.wrap-row .caret {
  margin-left: 9px;
}

/* Number */
.c-num {
  width: 174px;
  margin: 13px 0 0 4px;
  flex: none;
}

.num-row {
  display: grid;
  grid-template-columns: 30px 12px 34px 26px 12px 30px 30px;
  align-items: center;
  justify-items: center;
  margin: 14px 0 0 4px;
  height: 28px;
}

.dollar { font-size: 27px; color: #555; line-height: 24px; margin-top: -4px; }
.pct { font-size: 25px; color: #555; line-height: 24px; margin-top: -4px; }
.thou { font-size: 12.500px; }

.dec {
  display: flex;
  flex-direction: column;
  align-items: center;
  font-size: 12.500px;
  line-height: 14px;
}

.dec em {
  font-style: normal;
  display: flex;
  align-items: center;
  gap: 1px;
}

/* Big ribbon buttons */
.bigbtn {
  flex: none;
  display: flex;
  flex-direction: column;
  align-items: center;
  padding-top: 5px;
  line-height: 24px;
  white-space: nowrap;
  font-size: 16.800px;
}

.bigbtn.tight { font-size: 16px; }

.bigbtn svg { margin-bottom: 4px; height: 44px; }
.bigbtn svg.nudge6 { margin-left: 6px; }
.bigbtn svg.nudge2 { margin-left: 2px; }
.bigbtn.sort svg { height: 40px; margin-bottom: 8px; }

.bigbtn span {
  display: flex;
  align-items: center;
  gap: 5px;
  height: 24px;
}

.w114 { width: 114px; }
.w98 { width: 98px; }
.w90 { width: 90px; }
.w72 { width: 72px; }
.w58 { width: 58px; }
.w82 { width: 82px; }
.w106 { width: 106px; }

/* Editing */
.edit-list {
  width: 138px;
  padding-left: 8px;
  margin-top: -1px;
  flex: none;
}

.edit-row {
  height: 31px;
  display: flex;
  align-items: center;
}

.edit-row svg { width: 26px; padding-right: 4px; }
.edit-row .caret { margin-left: 4px; }
.edit-row .caret.gap14 { margin-left: 10px; }

.az {
  font: bold 26px "Liberation Sans", sans-serif;
}

.a-blue { fill: #4a7fb8; }
.a-purple { fill: #9a6cb8; }

.ribbon-end {
  flex: 1;
  display: flex;
  align-items: flex-end;
  justify-content: flex-end;
  padding: 0 11px 3px 0;
  height: 123px;
}

/* Formula bar */
.formula {
  height: 65px;
  flex: none;
  display: flex;
  padding-top: 15px;
  background: #e6e6e6;
}

.namebox {
  width: 152px;
  height: 34px;
  margin-left: 7px;
  background: #fff;
  border: 1px solid #c6c6c6;
  display: flex;
  align-items: center;
  justify-content: space-between;
  padding: 0 10px 0 7px;
  font-size: 18px;
}

.fdots {
  width: 45px;
  height: 34px;
  display: flex;
  flex-direction: column;
  align-items: center;
  justify-content: center;
  gap: 5px;
}

.fdots i, .hdots i {
  display: block;
  width: 3px;
  height: 3px;
  background: #999;
}

.fx-btns {
  width: 163px;
  height: 34px;
  background: #fff;
  border: 1px solid #c6c6c6;
  display: flex;
  align-items: center;
  gap: 37px;
  padding-left: 18px;
}

.fx {
  font: italic 22px "Liberation Serif", serif;
  color: #555;
}

.finput {
  flex: 1;
  height: 34px;
  margin: 0 7px 0 5px;
  background: #fff;
  border: 1px solid #c6c6c6;
  display: flex;
  align-items: center;
  justify-content: flex-end;
  padding-right: 7px;
}

/* Worksheet */
.sheet {
  height: 659px;
  flex: none;
  display: flex;
  background: #fff;
}

.grid-wrap {
  width: 1890px;
  height: 659px;
  overflow: hidden;
  position: relative;
  border-bottom: 1px solid #a8a8a8;
}

.grid {
  table-layout: fixed;
  width: 1890px;
  border-collapse: separate;
  border-spacing: 0;
  font: 19.300px/20px "Liberation Sans", sans-serif;
  color: #000;
}

.c-row { width: 42px; }
.c-a { width: 182px; }
.c-b { width: 201px; }
.c-c { width: 112px; }
.c-d { width: 642px; }
.c-e { width: 111px; }
.c-f { width: 113px; }
.c-g { width: 112px; }
.c-k { width: 39px; }

.grid tr { height: 23px; }
.grid tr.h24 { height: 24px; }
.grid tr.h46 { height: 46px; }
.grid tr.h48 { height: 48px; }

.grid th, .grid td {
  padding: 0 0 1px;
  font-weight: normal;
  vertical-align: bottom;
  white-space: nowrap;
  border-right: 1px solid #d4d4d4;
  border-bottom: 1px solid #d4d4d4;
}

.grid th {
  background: #e6e6e6;
  color: #333;
  text-align: center;
  border-right-color: #a8a8a8;
  border-bottom-color: #c6c6c6;
}

.grid tr.cols th {
  padding-bottom: 0;
  border-bottom-color: #a8a8a8;
  border-right-color: #c6c6c6;
}

.grid th.corner {
  border-right-color: #a8a8a8;
}

.corner svg {
  margin: 3px 0 2px 20px;
}

.grid tr.cols th.sel-col {
  background: #d2d2d2;
  color: #217346;
  padding-bottom: 0;
  border-bottom: 2px solid #217346;
}

.grid th.sel-row {
  background: #d2d2d2;
  color: #217346;
  border-right: 2px solid #217346;
}

.grid td.pv, .grid td.pv-head, .grid td.pv-total {
  border-right: 0;
  border-bottom: 0;
  padding: 0 3px 2px 4px;
}

.grid td.pv-head {
  background: #d8e6fa;
  padding-bottom: 1px;
  border-bottom: 1px solid #9dbde8;
  position: relative;
}

.grid td.pv-head:nth-child(3) { padding-left: 3px; border-right: 1px solid #d4d4d4; }
.grid td.pv.last { padding-bottom: 1px; border-bottom: 1px solid #9dbde8; }
.grid td.pv-total { background: #d8e6fa; }
.grid td.pv.num, .grid td.pv-total.num { text-align: right; border-right: 1px solid #d4d4d4; }

.filter {
  position: absolute;
  right: 1px;
  top: 1px;
  width: 23px;
  height: 22px;
  background: #f4f4f4;
  border: 1px solid #c6c6c6;
  display: flex;
  align-items: center;
  justify-content: center;
}

.grid td.d {
  padding-left: 3px;
  font-size: 19.200px;
}

.grid td.d b {
  font-size: 19.450px;
}

.grid td.wrapped {
  vertical-align: top;
  white-space: normal;
  padding-bottom: 0;
}

.wrapped div {
  height: 45px;
  margin-right: -4px;
  line-height: 24px;
}

.cell-cursor {
  position: absolute;
  left: 1289px;
  top: 164px;
  width: 115px;
  height: 25px;
  border: 2px solid #217346;
}

.cell-cursor::after {
  content: "";
  position: absolute;
  right: -4px;
  bottom: -4px;
  width: 6px;
  height: 6px;
  background: #217346;
  border: 1px solid #fff;
}

/* Chart */
.chart {
  position: absolute;
  left: 535px;
  top: 177px;
  width: 670px;
  height: 398px;
  background: #fff;
  border: 1px solid #d9d9d9;
  font-family: "Liberation Sans", sans-serif;
  color: #595959;
}

.chart-pill {
  width: 152px;
  height: 25px;
  margin: 11px 0 0 13px;
  background: #d9d9d9;
  color: #222;
  font-size: 15.500px;
  line-height: 25px;
  text-align: center;
  white-space: nowrap;
}

.chart-title {
  margin-top: 14px;
  padding-left: 101px;
  text-align: center;
  font-size: 32px;
  line-height: 39px;
  font-weight: bold;
  letter-spacing: 3.700px;
  color: #7f7f7f;
  white-space: nowrap;
}

.chart-body {
  display: flex;
  margin-top: 22px;
  height: 207px;
}

.decada {
  width: 91px;
  height: 25px;
  margin: 54px 0 0 9px;
  background: linear-gradient(#e4e4e4, #bdbdbd);
  color: #111;
  font-size: 14.500px;
  display: flex;
  align-items: center;
  gap: 6px;
  padding-left: 5px;
}

.decada .caret {
  border-left-width: 5px;
  border-right-width: 5px;
  border-top-width: 5px;
}

.cats {
  width: 50px;
  margin-right: 13px;
  display: flex;
  flex-direction: column;
  text-align: right;
  font-size: 16.400px;
  line-height: 23px;
}

.plot {
  width: 397px;
  border-left: 3px solid #bfbfbf;
  background: repeating-linear-gradient(90deg, transparent 0 97px, #d9d9d9 97px 98px, transparent 98px 98.400px);
}

.bar-row {
  height: 23px;
  display: flex;
  align-items: center;
}

.bar {
  height: 13px;
  background: repeating-linear-gradient(90deg, #fb7d0f 0 2px, #ffb06a 2px 3px);
  color: #404040;
  font-size: 16.800px;
  line-height: 15px;
  text-align: right;
  padding-right: 11px;
  white-space: nowrap;
}

.legend {
  margin: 104px 0 0 37px;
  height: 20px;
  display: flex;
  align-items: center;
  gap: 3px;
  font-size: 17px;
}

.legend i {
  display: block;
  width: 9px;
  height: 8px;
  background: repeating-linear-gradient(90deg, #fb7d0f 0 2px, #ffb06a 2px 3px);
}

.ticks {
  display: flex;
  margin: 9px 0 0 116px;
  font-size: 16px;
  line-height: 20px;
}

.ticks span {
  width: 98.400px;
  text-align: center;
}

/* Scrollbars */
.vscroll {
  width: 30px;
  display: flex;
  flex-direction: column;
  padding: 0 2px 0 1px;
  background: #e6e6e6;
}

.sbtn {
  width: 27px;
  height: 23px;
  flex: none;
  background: #fff;
  border: 1px solid #c6c6c6;
  display: flex;
  align-items: center;
  justify-content: center;
}

.sbtn.down { height: 25px; }

.vtrack {
  height: 50px;
  background: #d9d9d9;
  flex: none;
}

.vthumb {
  flex: 1;
  background: #fff;
  border: 1px solid #ababab;
}

.tri {
  display: block;
  width: 0;
  height: 0;
}

.tri.up { border: 6px solid transparent; border-top: 0; border-bottom: 7px solid #666; }
.tri.dn { border: 6px solid transparent; border-bottom: 0; border-top: 7px solid #666; }
.tri.lf { border: 6px solid transparent; border-left: 0; border-right: 6px solid #666; }
.tri.rt { border: 6px solid transparent; border-right: 0; border-left: 6px solid #666; }

/* Sheet tabs */
.sheetbar {
  height: 34px;
  flex: none;
  background: #e6e6e6;
  display: flex;
  border-bottom: 1px solid #c6c6c6;
}

.sheet-nav {
  width: 118px;
  display: flex;
  align-items: center;
  gap: 27px;
  padding-left: 30px;
  flex: none;
}

.sheet-tabs {
  width: 1021px;
  flex: none;
  display: flex;
  align-items: flex-start;
  border-left: 1px solid #b5b5b5;
  height: 30px;
  margin-top: 4px;
}

.stab {
  height: 26px;
  display: flex;
  align-items: center;
  justify-content: center;
  font-size: 18.800px;
  border-right: 1px solid #b5b5b5;
  white-space: nowrap;
  flex: none;
}

.stab.on {
  height: 31px;
  margin-top: -4px;
  padding-top: 2px;
  background: #fff;
  color: #217346;
  font-weight: bold;
  border-right: 0;
  border-bottom: 3px solid #217346;
}

.w93 { width: 93px; }
.w80 { width: 80px; }
.w48 { width: 48px; }
.w47 { width: 47px; }
.w81 { width: 81px; }
.stab.w48.on { width: 49px; }

.add { margin: 3px 0 0 41px; }

.hdots {
  width: 20px;
  margin-right: 9px;
  flex: none;
  display: flex;
  flex-direction: column;
  align-items: center;
  justify-content: center;
  gap: 5px;
}

.hscroll {
  width: 723px;
  height: 24px;
  margin-top: 5px;
  display: flex;
  flex: none;
}

.sbtn.h { width: 25px; height: 24px; }

.hthumb {
  width: 605px;
  background: #fff;
  border: 1px solid #ababab;
}

.htrack {
  flex: 1;
  background: #d9d9d9;
}

/* Status bar */
.statusbar {
  height: 33px;
  flex: none;
  background: #f1f1f1;
  display: flex;
  align-items: stretch;
}

.ready {
  padding-left: 7px;
  font-size: 16.500px;
  line-height: 33px;
  color: #555;
}

.views {
  margin-left: auto;
  display: flex;
}

.view {
  width: 44px;
  display: flex;
  align-items: center;
  justify-content: center;
}

.view.on { background: #c6c6c6; }

.zoomer {
  display: flex;
  align-items: center;
  margin-left: 6px;
  gap: 5px;
}

.slider {
  width: 150px;
  height: 1px;
  background: #888;
  position: relative;
}

.slider i {
  position: absolute;
  left: 68px;
  top: -7px;
  width: 5px;
  height: 15px;
  background: #666;
}

.zoom-pct {
  width: 57px;
  padding-left: 17px;
  font-size: 15.500px;
  line-height: 33px;
  color: #555;
}

/* Taskbar */
.taskbar {
  height: 72px;
  flex: none;
  background: #1c1f22;
  border-top: 2px solid #33363a;
  display: flex;
  align-items: center;
  color: #fff;
}

.tb-weather {
  width: 262px;
  flex: none;
  padding-left: 15px;
  position: relative;
  align-self: stretch;
  display: flex;
  align-items: center;
}

.badge {
  position: absolute;
  left: 31px;
  top: 10px;
  width: 23px;
  height: 23px;
  border-radius: 50%;
  background: #b3261e;
  color: #fff;
  font-size: 14px;
  line-height: 23px;
  text-align: center;
}

.tb-icon {
  width: 66px;
  height: 56px;
  flex: none;
  display: flex;
  align-items: center;
  justify-content: center;
  border-radius: 6px;
}

.tb-icon.copilot { width: 64px; margin-left: 7px; }
.tb-icon.active { width: 56px; margin: 0 5px; background: #2c3036; }

.searchbox {
  width: 326px;
  height: 44px;
  margin-left: 7px;
  margin-top: -2px;
  background: #f3f3f3;
  border-radius: 22px;
  flex: none;
  display: flex;
  align-items: center;
  padding-left: 15px;
  color: #555;
  font-size: 20px;
}

.searchbox span {
  margin-left: 16px;
}

.desert {
  margin-left: auto;
  margin-right: 9px;
}

.pre {
  font: bold 11px "Liberation Sans", sans-serif;
  fill: #222;
  text-anchor: middle;
}

.teams {
  font: bold 15px "Liberation Sans", sans-serif;
  fill: #4b53bc;
  text-anchor: middle;
}

.zoom-logo {
  width: 36px;
  height: 36px;
  border-radius: 10px;
  background: #0b5cff;
  color: #fff;
  font: 10px/36px "Liberation Sans", sans-serif;
  text-align: center;
}

.m-letter {
  font: 13px "Liberation Sans", sans-serif;
  fill: #d8e8f5;
  text-anchor: middle;
}

.doc-letter {
  font: bold 16px "Liberation Sans", sans-serif;
  fill: #fff;
  text-anchor: middle;
}

.tray {
  margin-left: auto;
  display: grid;
  grid-template-columns: 46px 50px 66px 42px 32px 42px 100px 42px 22px;
  align-items: center;
  justify-items: center;
}

.t-lang {
  font-size: 17px;
  line-height: 24px;
  text-align: center;
}

.t-clock {
  justify-self: end;
  display: flex;
  flex-direction: column;
  align-items: flex-end;
  font-size: 18px;
  line-height: 24px;
  white-space: nowrap;
}

.zz {
  font: bold 12px "Liberation Sans", sans-serif;
  fill: #1c1f22;
  text-anchor: middle;
}

.zz2 {
  font: bold 9px "Liberation Sans", sans-serif;
  fill: #fff;
}

.tb-dots i {
  position: absolute;
  top: 1068px;
  width: 5px;
  height: 5px;
  border-radius: 50%;
  background: #8a8a8a;
}

.tb-dots .d1 { left: 962px; }
.tb-dots .d2 { left: 1092px; }
.tb-dots .d3 { left: 1225px; }
.tb-dots .d4 { left: 1280px; width: 24px; border-radius: 3px; background: #9a9a9a; }
.tb-dots .d5 { left: 1357px; }
.tb-dots .d6 { left: 1423px; }

/* Activate Windows watermark */
.watermark {
  position: absolute;
  left: 1498px;
  top: 892px;
  color: rgba(120, 120, 120, .5);
  white-space: nowrap;
  pointer-events: none;
}

.wm-big {
  font-size: 28.700px;
  line-height: 40px;
}

.wm-small {
  font-size: 21px;
  line-height: 30px;
}
```
